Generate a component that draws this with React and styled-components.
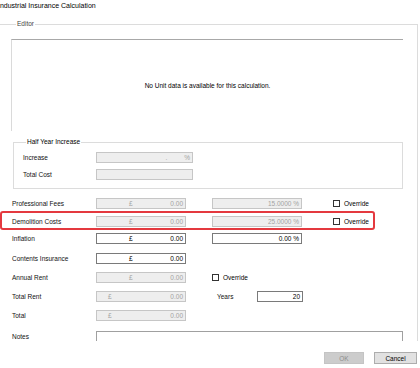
import styled, { createGlobalStyle } from "styled-components";

const GlobalStyle = createGlobalStyle`
  html, body { margin: 0; padding: 0; background: #fff; }
  body { font-family: "Liberation Sans", Arial, sans-serif; color: #111; }
  * { box-sizing: border-box; }
`;

const Window = styled.div`
  width: 420px;
  height: 368px;
  overflow: hidden;
  background: #fff;
`;

const Title = styled.div`
  margin: 1px 0 0 -2px;
  height: 9px;
  line-height: 9px;
  font-size: 7px;
  white-space: nowrap;
  color: #000;
`;

const Group = styled.fieldset`
  margin: ${p => p.$margin || 0};
  padding: ${p => p.$padding || 0};
  width: ${p => p.$width || "auto"};
  height: ${p => p.$height || "auto"};
  border: 1px solid #dcdcdc;
  border-bottom: ${p => (p.$open ? "none" : "1px solid #dcdcdc")};
  overflow: hidden;
  min-width: 0;
`;

const Legend = styled.legend`
  margin-left: ${p => p.$indent || 3}px;
  padding: 0 1px;
  height: 8px;
  line-height: 8px;
  font-size: 6.5px;
  color: ${p => p.$muted ? "#444" : "#000"};
`;

const UnitPanel = styled.div`
  height: 92px;
  display: flex;
  align-items: center;
  justify-content: center;
  border-top: 1px solid #a8a8a8;
  border-left: 1px solid #dadada;
  font-size: 6.5px;
  color: #000;
`;

const HalfRows = styled.div`
  display: flex;
  flex-direction: column;
  gap: 6px;
`;

const HalfRow = styled.div`
  display: grid;
  grid-template-columns: 73px 97px;
  align-items: center;
  height: 11px;
`;

const Label = styled.span`
  font-size: 6.5px;
  white-space: nowrap;
  color: #111;
  align-self: ${p => (p.$top ? "start" : "center")};
  margin-top: ${p => (p.$top ? "2px" : "0")};
`;

const Form = styled.div`
  margin-left: 1px;
  display: flex;
  flex-direction: column;
`;

const Row = styled.div`
  position: relative;
  display: grid;
  grid-template-columns: 84px 90px 26px 90px 31px auto;
  align-items: center;
  height: 11px;
  margin-top: ${p => p.$mt}px;
`;

const Highlight = styled.div`
  position: absolute;
  left: -12px;
  top: -5px;
  width: 375px;
  height: 19px;
  border: 2px solid #e4393f;
  border-radius: 3px;
  pointer-events: none;
`;

const Box = styled.div`
  height: 11px;
  display: flex;
  align-items: center;
  padding: 0 2px 0 0;
  font-size: 6.5px;
  white-space: nowrap;
  background: ${p => (p.$enabled ? "#fff" : "#eeeeee")};
  border: 1px solid ${p => (p.$enabled ? "#7a7a7a" : "#c6c6c6")};
  color: ${p => (p.$enabled ? "#000" : "#a3a3a3")};
`;

const Pound = styled.span`
  margin-left: ${p => p.$at}px;
`;

const Value = styled.span`
  margin-left: auto;
`;

const Dot = styled.span`
  margin-left: auto;
  margin-right: 17px;
`;

const Check = styled.label`
  display: flex;
  align-items: center;
  gap: 4px;
  font-size: 6.5px;
  color: #000;
  white-space: nowrap;
`;

const CheckSquare = styled.span`
  width: 7px;
  height: 7px;
  border: 1px solid #333;
  background: #fff;
`;

const YearsCell = styled.div`
  display: flex;
  align-items: center;
  justify-content: space-between;
  padding-left: 5px;
  grid-column: 4 / span 1;
`;

const YearsBox = styled(Box)`
  width: 46px;
  margin-right: -1px;
`;

const Notes = styled.div`
  grid-column: 2 / span 5;
  height: 20px;
  align-self: start;
  border: 1px solid #a0a0a0;
  background: #fff;
`;

const NotesRow = styled(Row)`
  grid-template-columns: 84px 1fr;
  align-items: start;
  height: 20px;
`;

const Footer = styled.div`
  display: flex;
  justify-content: flex-end;
  gap: 10px;
  margin-top: 11px;
  padding-right: 3px;
`;

const Button = styled.button`
  width: ${p => p.$w}px;
  height: 12px;
  padding: 0;
  font-family: inherit;
  font-size: 6.5px;
  background: ${p => (p.disabled ? "#cccccc" : "#e1e1e1")};
  border: 1px solid ${p => (p.disabled ? "#c4c4c4" : "#adadad")};
  color: ${p => (p.disabled ? "#8c8c8c" : "#000")};
`;

const Override = () => (
  <Check>
    <CheckSquare />
    Override
  </Check>
);

const Money = ({ enabled, at = 32 }) => (
  <Box $enabled={enabled}>
    <Pound $at={at}>£</Pound>
    <Value>0.00</Value>
  </Box>
);

const Percent = ({ enabled, value }) => (
  <Box $enabled={enabled}>
    <Value>{value} %</Value>
  </Box>
);

export default function App() {
  return (
    <Window>
      <GlobalStyle />
      <Title>Industrial Insurance Calculation</Title>
      <Group $margin="10px 0 0 -2px" $padding="11px 14px 0 12px" $width="420px" $height="321px" $open>
        <Legend $indent={5} $muted>Editor</Legend>
        <UnitPanel>No Unit data is available for this calculation.</UnitPanel>

        <Group $margin="7px 0 0 2px" $padding="6px 0 8px 9px">
          <Legend>Half Year Increase</Legend>
          <HalfRows>
            <HalfRow>
              <Label>Increase</Label>
              <Box>
                <Dot>.</Dot>
                <span>%</span>
              </Box>
            </HalfRow>
            <HalfRow>
              <Label>Total Cost</Label>
              <Box />
            </HalfRow>
          </HalfRows>
        </Group>

        <Form>
          <Row $mt={9}>
            <Label>Professional Fees</Label>
            <Money />
            <span />
            <Percent value="15.0000" />
            <span />
            <Override />
          </Row>
          <Row $mt={7}>
            <Highlight />
            <Label>Demolition Costs</Label>
            <Money />
            <span />
            <Percent value="25.0000" />
            <span />
            <Override />
          </Row>
          <Row $mt={6}>
            <Label>Inflation</Label>
            <Money enabled />
            <span />
            <Percent enabled value="0.00" />
          </Row>
          <Row $mt={9}>
            <Label>Contents Insurance</Label>
            <Money enabled />
          </Row>
          <Row $mt={8}>
            <Label>Annual Rent</Label>
            <Money />
            <span />
            <Override />
          </Row>
          <Row $mt={8}>
            <Label>Total Rent</Label>
            <Money at={11} />
            <YearsCell>
              <Label>Years</Label>
              <YearsBox $enabled>
                <Value>20</Value>
              </YearsBox>
            </YearsCell>
          </Row>
          <Row $mt={8}>
            <Label>Total</Label>
            <Money at={11} />
          </Row>
          <NotesRow $mt={10}>
            <Label $top>Notes</Label>
            <Notes />
          </NotesRow>
        </Form>
      </Group>
      <Footer>
        <Button $w={40} disabled>OK</Button>
        <Button $w={43}>Cancel</Button>
      </Footer>
    </Window>
  );
}
